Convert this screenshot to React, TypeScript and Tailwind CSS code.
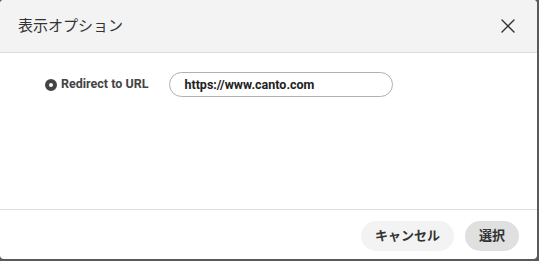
import { X } from 'lucide-react';

export default function App() {
  return (
    <div className="w-[539px] h-[261px] bg-[#5a5a5a] font-['Roboto','Noto_Sans_CJK_JP',sans-serif] text-[#333]">
      <div className="w-[537px] h-[259px] bg-white rounded-[4px] flex flex-col overflow-hidden">
        <div className="h-[53px] shrink-0 bg-[#f3f3f3] border-b border-[#dcdcdc] flex items-center justify-between pl-[18px] pr-[17px]">
          <h1 className="text-[15px] text-[#333] font-normal">表示オプション</h1>
          <X className="w-[24px] h-[24px] text-[#333]" strokeWidth={1.4} />
        </div>

        <div className="flex-1 flex items-start pt-[19px] pl-[45px]">
          <label className="flex items-center gap-[4px] h-[25px]">
            <span className="w-[12px] h-[12px] rounded-full border-[4px] border-[#444] bg-white" />
            <span className="text-[12.5px] font-bold text-[#444]">Redirect to URL</span>
          </label>
          <input
            type="text"
            defaultValue="https://www.canto.com"
            className="ml-[21px] w-[224px] h-[25px] rounded-full border border-[#b0b0b0] px-[14px] text-[12.5px] font-bold text-[#222] outline-none"
          />
        </div>

        <div className="h-[50px] shrink-0 border-t border-[#dcdcdc] flex items-start justify-end gap-[11px] pt-[11px] pr-[18px]">
          <button className="h-[30px] px-[14px] rounded-full bg-[#f3f3f3] text-[13px] font-bold text-[#333]">
            キャンセル
          </button>
          <button className="h-[30px] px-[14px] rounded-full bg-[#e0e0e0] text-[13px] font-bold text-[#333]">
            選択
          </button>
        </div>
      </div>
    </div>
  );
}
